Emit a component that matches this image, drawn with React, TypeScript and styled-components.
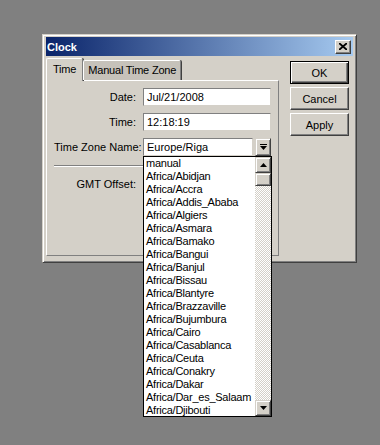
import styled, { createGlobalStyle } from "styled-components";

const GlobalStyle = createGlobalStyle`
  html, body {
    margin: 0;
    padding: 0;
    background: #808080;
  }
  body {
    width: 380px;
    height: 445px;
    overflow: hidden;
    font-family: "Liberation Sans", Arial, sans-serif;
    font-size: 11px;
    color: #000;
  }
`;

const zones = [
  "manual",
  "Africa/Abidjan",
  "Africa/Accra",
  "Africa/Addis_Ababa",
  "Africa/Algiers",
  "Africa/Asmara",
  "Africa/Bamako",
  "Africa/Bangui",
  "Africa/Banjul",
  "Africa/Bissau",
  "Africa/Blantyre",
  "Africa/Brazzaville",
  "Africa/Bujumbura",
  "Africa/Cairo",
  "Africa/Casablanca",
  "Africa/Ceuta",
  "Africa/Conakry",
  "Africa/Dakar",
  "Africa/Dar_es_Salaam",
  "Africa/Djibouti",
];

const Page = styled.div`
  padding: 34px 0 0 42px;
`;

const Dialog = styled.div`
  box-sizing: border-box;
  width: 315px;
  height: 229px;
  background: #d4d0c8;
  border: 1px solid;
  border-color: #d4d0c8 #404040 #404040 #d4d0c8;
  box-shadow: inset 1px 1px #fff, inset -1px -1px #808080;
  padding: 2px 3px 3px 3px;
`;

const TitleBar = styled.div`
  height: 19px;
  display: flex;
  align-items: center;
  justify-content: space-between;
  padding: 0 2px 0 1px;
  background: linear-gradient(to right, #0a246a, #a6caf0);
`;

const Title = styled.span`
  color: #fff;
  font-weight: bold;
  font-size: 11px;
`;

const CloseButton = styled.div`
  box-sizing: border-box;
  width: 16px;
  height: 14px;
  background: #d4d0c8;
  border: 1px solid;
  border-color: #fff #404040 #404040 #fff;
  box-shadow: inset -1px -1px #808080;
  display: flex;
  align-items: center;
  justify-content: center;
`;

const Content = styled.div`
  display: flex;
  gap: 11px;
  padding-top: 2px;
`;

const LeftColumn = styled.div`
  width: 233px;
  display: flex;
  flex-direction: column;
`;

const TabRow = styled.div`
  display: flex;
  align-items: flex-end;
  height: 22px;
  position: relative;
  z-index: 1;
`;

const Tab = styled.div<{ $active?: boolean }>`
  box-sizing: border-box;
  height: ${(p) => (p.$active ? "23px" : "20px")};
  margin-bottom: ${(p) => (p.$active ? "-1px" : "0")};
  padding: ${(p) => (p.$active ? "4px 6px 0 6px" : "3px 4px 0 4px")};
  background: ${(p) => (p.$active ? "#d4d0c8" : "#c6c2ba")};
  border-top: 1px solid #fff;
  border-left: 1px solid #fff;
  border-right: 1px solid #808080;
  box-shadow: 1px 0 0 #404040;
  border-radius: 2px 2px 0 0;
  white-space: nowrap;
  letter-spacing: -0.2px;
`;

const Panel = styled.div`
  box-sizing: border-box;
  height: 176px;
  border: 1px solid;
  border-color: #fff #808080 #808080 #fff;
  padding: 7px 7px 0 7px;
`;

const FormGrid = styled.div`
  display: grid;
  grid-template-columns: 82px 128px;
  column-gap: 7px;
  row-gap: 7px;
`;

const Label = styled.div`
  text-align: right;
  line-height: 18px;
  white-space: nowrap;
`;

const Input = styled.div<{ $width?: number }>`
  box-sizing: border-box;
  width: ${(p) => p.$width ?? 128}px;
  height: 18px;
  background: #fff;
  border: 1px solid;
  border-color: #808080 #d4d0c8 #d4d0c8 #808080;
  padding: 0 3px;
  line-height: 16px;
  white-space: nowrap;
`;

const SelectWrap = styled.div`
  position: relative;
  display: flex;
  justify-content: space-between;
  width: 128px;
`;

const ArrowButton = styled.div<{ $height?: number }>`
  box-sizing: border-box;
  width: 16px;
  height: ${(p) => p.$height ?? 18}px;
  background: #d4d0c8;
  border: 1px solid;
  border-color: #d4d0c8 #404040 #404040 #d4d0c8;
  box-shadow: inset 1px 1px #fff, inset -1px -1px #808080;
  display: flex;
  align-items: center;
  justify-content: center;
`;

const Separator = styled.div`
  margin: 9px 0 8px 0;
  height: 0;
  border-top: 1px solid #808080;
  border-bottom: 1px solid #fff;
`;

const DropList = styled.div`
  position: absolute;
  top: 18px;
  left: 0;
  width: 129px;
  height: 261px;
  box-sizing: border-box;
  background: #fff;
  border: 1px solid #000;
  display: flex;
  z-index: 10;
`;

const Options = styled.div`
  flex: 1;
  overflow: hidden;
`;

const Option = styled.div`
  height: 13px;
  line-height: 13px;
  padding-left: 2px;
  white-space: nowrap;
  letter-spacing: -0.25px;
`;

const ScrollBar = styled.div`
  width: 16px;
  display: flex;
  flex-direction: column;
  background: repeating-conic-gradient(#d4d0c8 0 25%, #fff 0 50%) 0 0 / 2px 2px;
`;

const Thumb = styled(ArrowButton)`
  height: 13px;
`;

const Track = styled.div`
  flex: 1;
`;

const ButtonColumn = styled.div`
  display: flex;
  flex-direction: column;
  gap: 3px;
  padding-top: 3px;
`;

const Button = styled.div<{ $default?: boolean }>`
  box-sizing: border-box;
  width: 59px;
  height: 23px;
  background: #d4d0c8;
  border: 1px solid;
  border-color: ${(p) =>
    p.$default ? "#000" : "#fff #404040 #404040 #fff"};
  box-shadow: ${(p) =>
    p.$default
      ? "inset 1px 1px #fff, inset -1px -1px #404040, inset -2px -2px #808080"
      : "inset -1px -1px #808080"};
  display: flex;
  align-items: center;
  justify-content: center;
`;

const DropArrow = () => (
  <svg width="7" height="7" viewBox="0 0 7 7">
    <rect x="0" y="0" width="7" height="1" fill="#000" />
    <polygon points="0,2 7,2 3.5,6" fill="#000" />
  </svg>
);

const Triangle = ({ up }: { up?: boolean }) => (
  <svg width="7" height="4" viewBox="0 0 7 4">
    <polygon points={up ? "0,4 7,4 3.5,0" : "0,0 7,0 3.5,4"} fill="#000" />
  </svg>
);

const App = () => {
  return (
    <Page>
      <GlobalStyle />
      <Dialog>
        <TitleBar>
          <Title>Clock</Title>
          <CloseButton>
            <svg width="8" height="7" viewBox="0 0 8 7">
              <path d="M0 0 L8 7 M8 0 L0 7" stroke="#000" strokeWidth="1.8" />
            </svg>
          </CloseButton>
        </TitleBar>
        <Content>
          <LeftColumn>
            <TabRow>
              <Tab $active>Time</Tab>
              <Tab>Manual Time Zone</Tab>
            </TabRow>
            <Panel>
              <FormGrid>
                <Label>Date:</Label>
                <Input>Jul/21/2008</Input>
                <Label>Time:</Label>
                <Input>12:18:19</Input>
                <Label>Time Zone Name:</Label>
                <SelectWrap>
                  <Input $width={110}>Europe/Riga</Input>
                  <ArrowButton>
                    <DropArrow />
                  </ArrowButton>
                  <DropList>
                    <Options>
                      {zones.map((z) => (
                        <Option key={z}>{z}</Option>
                      ))}
                    </Options>
                    <ScrollBar>
                      <ArrowButton $height={16}>
                        <Triangle up />
                      </ArrowButton>
                      <Thumb />
                      <Track />
                      <ArrowButton $height={16}>
                        <Triangle />
                      </ArrowButton>
                    </ScrollBar>
                  </DropList>
                </SelectWrap>
              </FormGrid>
              <Separator />
              <FormGrid>
                <Label>GMT Offset:</Label>
                <div />
              </FormGrid>
            </Panel>
          </LeftColumn>
          <ButtonColumn>
            <Button $default>OK</Button>
            <Button>Cancel</Button>
            <Button>Apply</Button>
          </ButtonColumn>
        </Content>
      </Dialog>
    </Page>
  );
};

export default App;
